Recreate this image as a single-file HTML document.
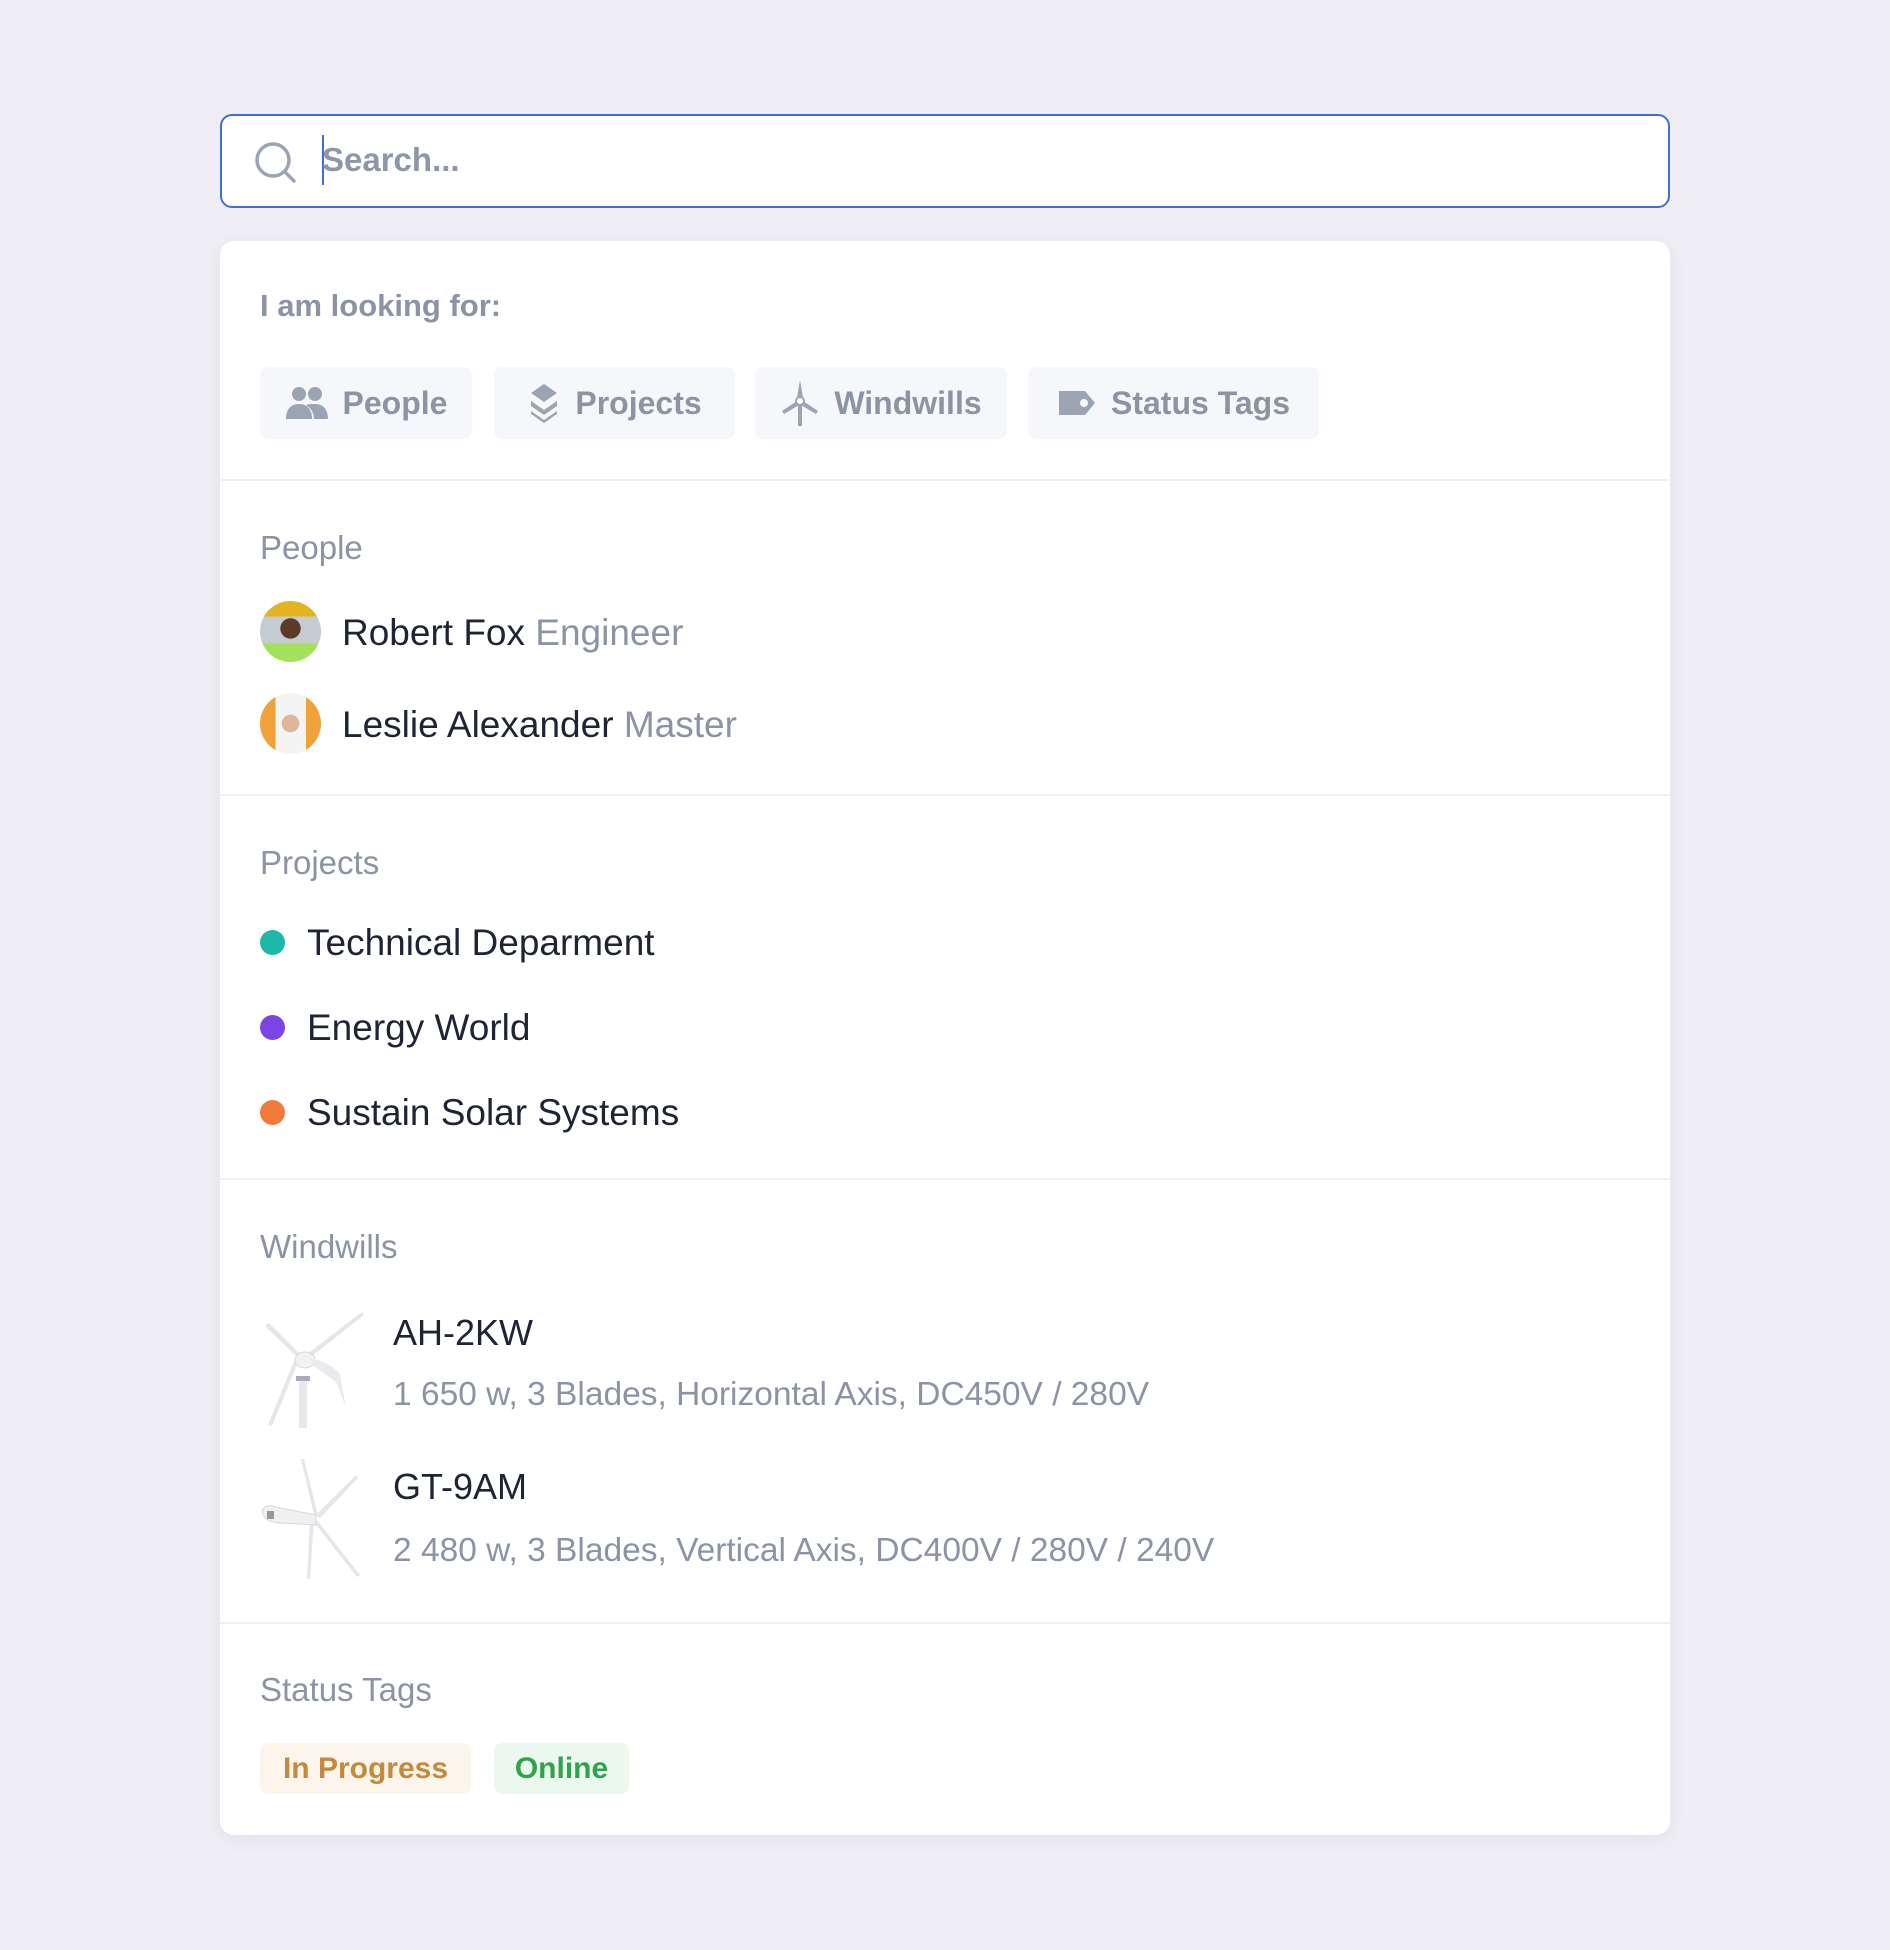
<!DOCTYPE html>
<html><head><meta charset="utf-8"><style>
*{margin:0;padding:0;box-sizing:border-box}
body{width:1890px;height:1950px;background:#eeeef4;font-family:"Liberation Sans",sans-serif;position:relative;overflow:hidden}
.a{position:absolute;white-space:nowrap;line-height:1}
.search{position:absolute;left:220px;top:114px;width:1450px;height:94px;background:#fff;border:2.5px solid #3f6fd6;border-radius:12px}
.card{position:absolute;left:220px;top:241px;width:1450px;height:1594px;background:#fff;border-radius:14px;box-shadow:0 4px 20px rgba(40,40,80,.06)}
.hr{position:absolute;left:220px;width:1450px;height:2px;background:#f0f1f5}
.chip{position:absolute;top:367px;height:72px;background:#f6f7fa;border-radius:8px;color:#8b93a5;font-weight:bold;font-size:32px;display:flex;align-items:center;justify-content:center;gap:14px}
.h{color:#8b93a5;font-size:33px}
.t{color:#1e2433;font-size:37px}
.g{color:#8b93a5}
.dot{position:absolute;width:25px;height:25px;border-radius:50%;left:260px}
.tag{position:absolute;top:1743px;height:51px;border-radius:8px;font-weight:bold;font-size:30px;display:flex;align-items:center;justify-content:center}
.av{position:absolute;left:260px;width:61px;height:61px;border-radius:50%;overflow:hidden}
</style></head><body>
<div class="search"></div>
<svg class="a" style="left:252px;top:139px" width="48" height="48" viewBox="0 0 48 48"><circle cx="21" cy="21" r="16" fill="none" stroke="#9ca3b2" stroke-width="3.5"/><line x1="33" y1="33" x2="42" y2="42" stroke="#9ca3b2" stroke-width="3.5" stroke-linecap="round"/></svg>
<div class="a" style="left:322px;top:135px;width:2px;height:50px;background:#3f6fd6"></div>
<div class="a" style="left:322px;top:143px;font-size:33px;color:#8e96a8;font-weight:bold">Search...</div>

<div class="card"></div>
<div class="a" style="left:260px;top:290px;font-size:31px;font-weight:bold;color:#8b93a5">I am looking for:</div>

<div class="chip" style="left:260px;width:212px"><svg width="44" height="36" viewBox="0 0 44 36"><circle cx="14" cy="9" r="7" fill="#9ca3b2"/><circle cx="30" cy="9" r="7" fill="#9ca3b2"/><path d="M1 34c0-10 5-15 13-15s13 5 13 15z" fill="#9ca3b2"/><path d="M21 20c2-1 5-1 9-1 8 0 13 5 13 15H29c0-6-3-11-8-14z" fill="#9ca3b2"/></svg>People</div>
<div class="chip" style="left:494px;width:241px"><svg width="34" height="40" viewBox="0 0 34 40"><path d="M17 1l13 9-13 9-13-9z" fill="#9ca3b2"/><path d="M4 18l13 9 13-9v5l-13 9-13-9z" fill="#9ca3b2"/><path d="M4 28l13 9 13-9v3l-13 9-13-9z" fill="#9ca3b2"/></svg>Projects</div>
<div class="chip" style="left:755px;width:252px"><svg width="40" height="48" viewBox="0 0 40 48"><path d="M20 1l3 18h-6z" fill="#9ca3b2"/><path d="M17 22L2 32l2 3 15-9z" fill="#9ca3b2"/><path d="M23 22l15 10-2 3-15-9z" fill="#9ca3b2"/><circle cx="20" cy="22" r="4" fill="#fff" stroke="#9ca3b2" stroke-width="2"/><rect x="18" y="26" width="4" height="21" fill="#9ca3b2"/></svg>Windwills</div>
<div class="chip" style="left:1028px;width:291px"><svg width="40" height="30" viewBox="0 0 40 30"><path d="M2 3h26l10 12-10 12H2z" fill="#9ca3b2"/><circle cx="27" cy="15" r="4" fill="#f6f7fa"/></svg>Status Tags</div>

<div class="hr" style="top:479px"></div>
<div class="a h" style="left:260px;top:531px">People</div>
<div class="av" style="top:601px;background:radial-gradient(circle at 50% 45%,#5a3a28 0 22%,transparent 23%),linear-gradient(#e3b420 0 25%,#c4ccd2 25% 70%,#a5e05a 70%)"></div>
<div class="a t" style="left:342px;top:614px">Robert Fox <span class="g">Engineer</span></div>
<div class="av" style="top:693px;background:radial-gradient(circle at 50% 50%,#e0b69a 0 20%,transparent 21%),linear-gradient(90deg,#f0a23a 0 25%,#f4f4f4 25% 75%,#f0a23a 75%)"></div>
<div class="a t" style="left:342px;top:706px">Leslie Alexander <span class="g">Master</span></div>

<div class="hr" style="top:794px"></div>
<div class="a h" style="left:260px;top:846px">Projects</div>
<div class="dot" style="top:930px;background:#1cb8a8"></div>
<div class="a t" style="left:307px;top:924px">Technical Deparment</div>
<div class="dot" style="top:1015px;background:#7b45e6"></div>
<div class="a t" style="left:307px;top:1009px">Energy World</div>
<div class="dot" style="top:1100px;background:#f27b3c"></div>
<div class="a t" style="left:307px;top:1094px">Sustain Solar Systems</div>

<div class="hr" style="top:1178px"></div>
<div class="a h" style="left:260px;top:1230px">Windwills</div>
<svg class="a" style="left:260px;top:1308px" width="104" height="120" viewBox="0 0 104 120"><path d="M38 50L5 18l4-3 33 33z" fill="#e4e6ea"/><path d="M42 50L102 4l2 3-58 46z" fill="#e4e6ea"/><path d="M38 54L12 118l-4-1 26-64z" fill="#e4e6ea"/><ellipse cx="45" cy="52" rx="10" ry="8" fill="#f1f2f4" stroke="#d5d8dd"/><path d="M50 50q20 4 30 16l6 34-10-26-22-16z" fill="#e9ebee"/><rect x="39" y="70" width="8" height="50" fill="#e6e8eb"/><rect x="36" y="68" width="14" height="5" fill="#aab"/></svg>
<div class="a t" style="left:393px;top:1315px;font-size:36px">AH-2KW</div>
<div class="a g" style="left:393px;top:1378px;font-size:33.5px">1 650 w, 3 Blades, Horizontal Axis, DC450V / 280V</div>
<svg class="a" style="left:260px;top:1459px" width="104" height="120" viewBox="0 0 104 120"><path d="M54 56L41 0l3 0 14 56z" fill="#e4e6ea"/><path d="M56 56L96 16l2 3-38 40z" fill="#e4e6ea"/><path d="M56 60l44 56-3 2-44-56z" fill="#e4e6ea"/><path d="M54 60l-4 60h-3l3-60z" fill="#e4e6ea"/><path d="M2 52q4-8 14-4l40 8v10l-34-2q-18 0-20-12z" fill="#eef0f2" stroke="#d5d8dd"/><rect x="7" y="52" width="7" height="8" fill="#999"/></svg>
<div class="a t" style="left:393px;top:1469px;font-size:36px">GT-9AM</div>
<div class="a g" style="left:393px;top:1534px;font-size:33.5px">2 480 w, 3 Blades, Vertical Axis, DC400V / 280V / 240V</div>

<div class="hr" style="top:1622px"></div>
<div class="a h" style="left:260px;top:1673px">Status Tags</div>
<div class="tag" style="left:260px;width:211px;background:#fbf5ec;color:#c4893d">In Progress</div>
<div class="tag" style="left:494px;width:135px;background:#eaf8ee;color:#33a24c">Online</div>
</body></html>
